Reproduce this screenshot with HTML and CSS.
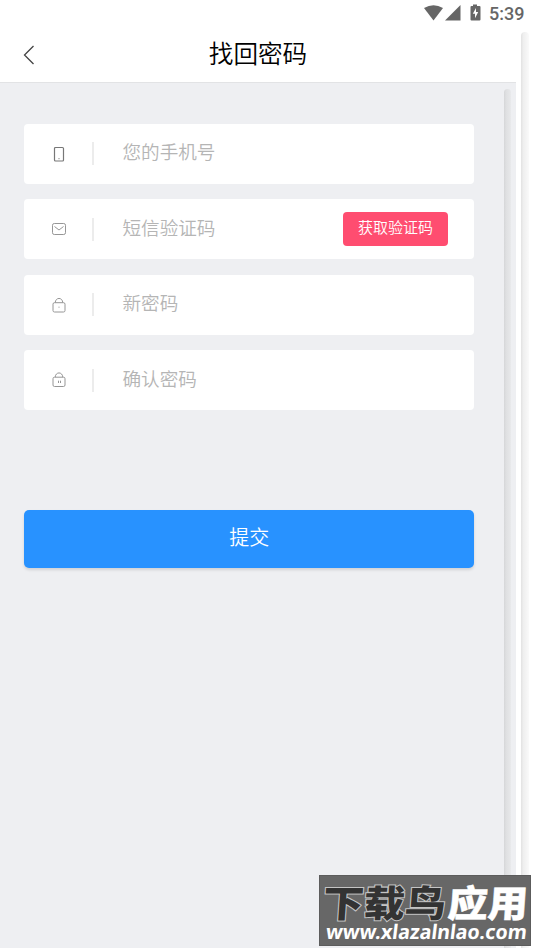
FILE: index.html
```html
<!DOCTYPE html>
<html lang="zh-CN">
<head>
<meta charset="utf-8">
<title>找回密码</title>
<link rel="stylesheet" href="styles.css">
</head>
<body>
<div class="status">
  <svg class="status-icons" width="60" height="22" viewBox="0 0 60 22">
    <path d="M0 8Q9.500 2.500 19 8L9.500 20.500Z"/>
    <path d="M36.500 5V20.500H21Z"/>
    <path fill-rule="evenodd" d="M49 4.500H53V6H55.500Q56.500 6 56.500 7V19.500Q56.500 20.500 55.500 20.500H47.500Q46.500 20.500 46.500 19.500V7Q46.500 6 47.500 6H49ZM52 8L48.800 13.800H51V18.300L54.200 12H52Z"/>
  </svg>
  <span class="clock">5:39</span>
</div>
<div class="body">
  <div class="page">
    <header class="header">
      <svg class="back" width="14" height="22" viewBox="0 0 14 22"><path d="M11.500 2 2.500 11 11.500 20"/></svg>
      <h1>找回密码</h1>
    </header>
    <main class="panel">
      <form class="form">
        <div class="field">
          <svg class="icon" width="18" height="18" viewBox="0 0 18 18"><rect class="dark" x="4.500" y="2.500" width="9" height="13.500" rx="1"/><path d="M8.300 13.700h1.400"/></svg>
          <span class="label">您的手机号</span>
        </div>
        <div class="field">
          <svg class="icon" width="18" height="18" viewBox="0 0 18 18"><rect x="2.500" y="3.500" width="13" height="11" rx="1.800"/><path d="M4.500 6.500 9 10 13.500 6.500"/></svg>
          <span class="label">短信验证码</span>
          <span class="code">获取验证码</span>
        </div>
        <div class="field">
          <svg class="icon" width="18" height="18" viewBox="0 0 18 18"><rect x="3" y="6.700" width="12" height="9.300" rx="1.500"/><path d="M5.200 6.700C5.500 1 12.500 1 12.800 6.700"/><path class="dot" d="M9 10.500v1.500"/></svg>
          <span class="label">新密码</span>
        </div>
        <div class="field">
          <svg class="icon" width="18" height="18" viewBox="0 0 18 18"><rect x="3" y="6.200" width="12" height="9.300" rx="1.500"/><path d="M5.200 6.200C5.500 .5 12.500 .5 12.800 6.200M8.500 9.700v2.300M10.500 9.700v2.300"/></svg>
          <span class="label">确认密码</span>
        </div>
        <div class="submit"><span>提交</span></div>
      </form>
      <div class="scroll inner"></div>
    </main>
  </div>
  <div class="scroll outer"></div>
</div>
<div class="watermark">
  <svg width="212" height="71" viewBox="0 0 212 71">
    <g transform="skewX(-4)">
      <text class="mark-dark" x="6" y="42" textLength="123" lengthAdjust="spacingAndGlyphs">下载鸟</text>
      <text class="mark-light" x="131" y="42" textLength="80" lengthAdjust="spacingAndGlyphs">应用</text>
    </g>
    <g transform="skewX(-7)">
      <text class="mark-url" x="14" y="64" textLength="201" lengthAdjust="spacingAndGlyphs">www.xlazalnlao.com</text>
    </g>
  </svg>
</div>
</body>
</html>
```

FILE: styles.css
```css
* { box-sizing: border-box; }
body {
  margin: 0;
  width: 534px;
  height: 950px;
  overflow: hidden;
  position: relative;
  background: #fff;
  font-family: "Noto Sans CJK SC", sans-serif;
  font-weight: 350;
}
.status {
  height: 28px;
  padding-right: 10px;
  display: flex;
  justify-content: flex-end;
  gap: 5px;
  color: #666;
}
.status-icons { fill: #666; }
.clock {
  font: 500 18px/27px Roboto, sans-serif;
  width: 35px;
  white-space: nowrap;
}
.body { display: flex; height: 920px; }
.page { width: 516px; }
.header {
  height: 54px;
  display: flex;
  align-items: center;
  padding-left: 22px;
}
.back { fill: none; stroke: #444; stroke-width: 1.3; }
.header h1 {
  flex: 1;
  margin: 0 36px 0 0;
  padding-bottom: 7px;
  text-align: center;
  font-size: 24.600px;
  line-height: 46px;
  font-weight: 350;
  color: #000;
}
.panel {
  display: flex;
  height: 866px;
  background: #eeeff2;
  border-top: 1px solid #e2e3e5;
}
.form { width: 504px; padding: 40.600px 29.800px 0 24.400px; }
.field {
  height: 60px;
  margin-bottom: 15.500px;
  padding: 0 26px 0 25.600px;
  display: flex;
  align-items: center;
  background: #fff;
  border-radius: 4px;
}
.icon { fill: none; stroke: #969696; stroke-width: 1; flex: none; }
.icon .dark { stroke: #777; stroke-width: 1.2; }
.icon .dot { stroke: #bbb; }
.label {
  margin-left: 24px;
  padding-left: 28.500px;
  border-left: 2px solid #ececec;
  height: 23px;
  font-size: 18.600px;
  line-height: 18px;
  color: #b5b5b5;
  white-space: nowrap;
}
.code {
  margin-left: auto;
  width: 105.500px;
  height: 34px;
  border-radius: 4px;
  background: #ff4d70;
  color: #fff;
  text-align: center;
  font-size: 15px;
  line-height: 30px;
}
.submit {
  margin-top: 99.500px;
  height: 58px;
  border-radius: 5px;
  background: #2892ff;
  box-shadow: 0 2px 3px rgba(0, 0, 0, .12);
  color: #fff;
  text-align: center;
  font-size: 20px;
  line-height: 53px;
}
.scroll { width: 7px; border-radius: 4px 4px 0 0; }
.inner {
  margin-top: 6px;
  background: linear-gradient(90deg, #d5d6d8, #dfe0e2 30%, #e5e6e8 80%, #e9eaec);
}
.outer {
  margin: 4px 0 0 5px;
  width: 8px;
  background: linear-gradient(90deg, #e2e2e2, #efefef 30%, #f5f5f5 70%, #fafafa);
}
.watermark {
  position: absolute;
  left: 319px;
  top: 875px;
  width: 212px;
  height: 71px;
  background: #676767;
  border: 1px solid #5c5c5c;
}
.watermark svg { display: block; margin: -1px; }
.mark-dark, .mark-light { font: 900 37px "Noto Sans CJK SC", sans-serif; }
.mark-dark { fill: #333; stroke: #c4c4c4; stroke-width: 2px; paint-order: stroke; }
.mark-light { fill: #fff; stroke: #fff; stroke-width: .5px; }
.mark-url { font: 700 20px "Noto Sans", sans-serif; fill: #fff; }
```
